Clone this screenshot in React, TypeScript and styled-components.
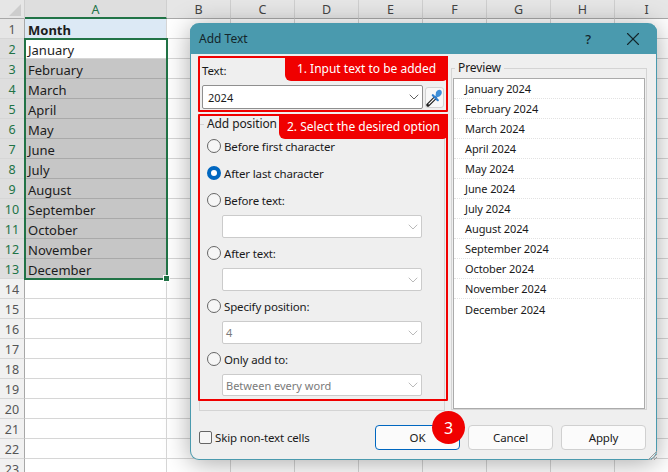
import * as React from "react";
import styled, { createGlobalStyle } from "styled-components";
import { ChevronDown, X } from "lucide-react";

const GlobalStyle = createGlobalStyle`
  html, body {
    margin: 0;
    padding: 0;
    background: #fff;
  }
  body {
    font-family: "Noto Sans", "Open Sans", sans-serif;
    overflow: hidden;
  }
`;

const Page = styled.div`
  position: relative;
  width: 668px;
  height: 472px;
  overflow: hidden;
`;

const Sheet = styled.div`
  display: grid;
  grid-template-columns: 25px 142px repeat(8, 64px);
  grid-template-rows: 19px repeat(23, 20px);
  font-size: 13px;
  color: #1c1c1c;
`;

const Corner = styled.div`
  background: #e6e6e6;
  border-right: 1px solid #cfcfcf;
  border-bottom: 1px solid #a8a8a8;
  box-sizing: border-box;
  position: relative;
  &::after {
    content: "";
    position: absolute;
    right: 3px;
    bottom: 2px;
    border-style: solid;
    border-width: 0 0 12px 12px;
    border-color: transparent transparent #cdcdcd transparent;
  }
`;

const ColHead = styled.div<{ $active?: boolean }>`
  box-sizing: border-box;
  display: flex;
  align-items: center;
  justify-content: center;
  padding-top: 1px;
  background: ${(p) => (p.$active ? "#dedede" : "#e6e6e6")};
  color: ${(p) => (p.$active ? "#217346" : "#444")};
  border-right: 1px solid #cfcfcf;
  border-bottom: ${(p) => (p.$active ? "2px solid #217346" : "1px solid #a8a8a8")};
  font-size: 12.5px;
`;

const RowHead = styled.div<{ $active?: boolean; $lit?: boolean }>`
  box-sizing: border-box;
  display: flex;
  align-items: center;
  justify-content: center;
  padding-top: 2px;
  background: ${(p) => (p.$active ? "#dedede" : p.$lit ? "#e6e6e6" : "#f1f1f1")};
  color: ${(p) => (p.$active ? "#217346" : "#555")};
  border-right: 1px solid ${(p) => (p.$active ? "#217346" : "#a8a8a8")};
  border-bottom: 1px solid #d6d6d6;
  font-size: 12.5px;
`;

const Cell = styled.div<{ $tone?: "title" | "shade" | "plain" }>`
  box-sizing: border-box;
  display: flex;
  align-items: center;
  padding: 2px 0 0 3px;
  white-space: nowrap;
  border-right: 1px solid #d6d6d6;
  border-bottom: 1px solid ${(p) => (p.$tone === "shade" ? "#a9a9a9" : "#d6d6d6")};
  background: ${(p) =>
    p.$tone === "title" ? "#dce9f5" : p.$tone === "shade" ? "#c6c6c6" : "#fff"};
  font-weight: ${(p) => (p.$tone === "title" ? 700 : 400)};
`;

const Selection = styled.div`
  position: absolute;
  left: 24px;
  top: 38px;
  width: 144px;
  height: 242px;
  box-sizing: border-box;
  border: 2px solid #217346;
  pointer-events: none;
  &::after {
    content: "";
    position: absolute;
    right: -4px;
    bottom: -4px;
    width: 5px;
    height: 5px;
    background: #217346;
    border: 1px solid #fff;
  }
`;

const Dialog = styled.div`
  position: absolute;
  left: 190px;
  top: 23px;
  width: 467px;
  height: 437px;
  box-sizing: border-box;
  display: flex;
  flex-direction: column;
  background: #efefef;
  border: 1px solid #4a9aae;
  border-top: 0;
  border-radius: 9px;
  box-shadow: 0 3px 26px rgba(0, 0, 0, 0.34);
  font-size: 11.5px;
  letter-spacing: -0.15px;
  color: #1a1a1a;
`;

const TitleBar = styled.div`
  height: 31px;
  flex: none;
  margin: 0 -1px;
  padding: 0 13px 0 9px;
  display: flex;
  align-items: center;
  background: #4a9aae;
  border-radius: 9px 9px 0 0;
`;

const Title = styled.span`
  flex: 1;
  font-size: 12px;
  letter-spacing: 0;
  color: #14262b;
`;

const HelpMark = styled.span`
  font-size: 13px;
  font-weight: 500;
  margin-right: 31px;
  color: #14262b;
`;

const Body = styled.div`
  flex: none;
  display: flex;
  gap: 6px;
  padding: 0 0 0 8px;
`;

const LeftColumn = styled.div`
  width: 246px;
  display: flex;
  flex-direction: column;
`;

const TextBlock = styled.div`
  padding: 10px 0 0 3px;
  height: 51px;
`;

const TextLabel = styled.div`
  line-height: 14px;
  margin-bottom: 7px;
`;

const TextRow = styled.div`
  display: flex;
  align-items: center;
  gap: 2px;
`;

const Combo = styled.div<{ $width?: number; $height?: number; $strong?: boolean; $off?: boolean }>`
  box-sizing: border-box;
  width: ${(p) => p.$width ?? 200}px;
  height: ${(p) => p.$height ?? 23}px;
  margin-left: ${(p) => (p.$strong ? 0 : 15)}px;
  flex: none;
  display: flex;
  align-items: center;
  padding: 0 0 0 ${(p) => (p.$strong ? 5 : 3)}px;
  background: #fff;
  border: 1px solid ${(p) => (p.$strong ? "#8f8f8f" : "#cbcbcb")};
  border-radius: 2px;
  color: ${(p) => (p.$off ? "#7a7a7a" : "#1a1a1a")};
  font-size: 11px;
  letter-spacing: 0;
  svg {
    margin-left: auto;
    color: ${(p) => (p.$strong ? "#555" : "#b5b5b5")};
  }
`;

const PickerButton = styled.div`
  box-sizing: border-box;
  width: 19px;
  height: 21px;
  display: flex;
  align-items: center;
  justify-content: center;
  background: #f8f8f8;
  border: 1px solid #d2d2d2;
  border-radius: 3px;
`;

const Group = styled.fieldset`
  margin: 0;
  min-width: 0;
  box-sizing: border-box;
  border: 1px solid #d4d4d4;
`;

const Legend = styled.legend<{ $indent: number }>`
  padding: 0 3px;
  margin-left: ${(p) => p.$indent}px;
  line-height: 18px;
  font-size: 12px;
  letter-spacing: -0.1px;
`;

const PositionGroup = styled(Group)`
  height: 296px;
  padding: 4px 0 0 7px;
  display: flex;
  flex-direction: column;
`;

const Option = styled.label<{ $gap?: number }>`
  height: 18px;
  margin-top: ${(p) => p.$gap ?? 0}px;
  flex: none;
  display: flex;
  align-items: center;
  gap: 3px;
`;

const Radio = styled.span<{ $on?: boolean }>`
  box-sizing: border-box;
  width: 14px;
  height: 14px;
  flex: none;
  border-radius: 50%;
  background: ${(p) => (p.$on ? "#fff" : "#f6f6f6")};
  border: ${(p) => (p.$on ? "4px solid #0067c0" : "1px solid #666")};
`;

const ComboSlot = styled.div<{ $top: number }>`
  margin-top: ${(p) => p.$top}px;
`;

const PreviewGroup = styled(Group)`
  width: 196px;
  height: 351px;
  margin-top: 5px;
  padding: 1px 1px 0;
`;

const PreviewList = styled.div`
  box-sizing: border-box;
  height: 331px;
  background: #fff;
  border: 1px solid #ababab;
`;

const PreviewRow = styled.div`
  height: 20px;
  box-sizing: border-box;
  padding-left: 11px;
  display: flex;
  align-items: center;
  border-bottom: 1px dotted #e2e2e2;
  font-size: 11px;
  letter-spacing: -0.1px;
  &:last-child {
    border-bottom: 0;
  }
`;

const Footer = styled.div`
  flex: 1;
  display: flex;
  align-items: flex-start;
  padding: 14px 10px 0 8px;
`;

const SkipLabel = styled.label`
  height: 25px;
  display: flex;
  align-items: center;
  gap: 3px;
`;

const CheckBox = styled.span`
  box-sizing: border-box;
  width: 13px;
  height: 13px;
  background: #f6f6f6;
  border: 1px solid #666;
  border-radius: 2px;
`;

const Buttons = styled.div`
  margin-left: auto;
  display: flex;
  gap: 8px;
`;

const Button = styled.div<{ $primary?: boolean }>`
  box-sizing: border-box;
  width: 85px;
  height: 25px;
  display: flex;
  align-items: center;
  justify-content: center;
  background: #fbfbfb;
  border: 1px solid ${(p) => (p.$primary ? "#0067c0" : "#d0d0d0")};
  border-radius: 4px;
`;

const Grip = styled.svg`
  position: absolute;
  right: -1px;
  bottom: -1px;
`;

const Highlight = styled.div<{ $top: number; $height: number }>`
  position: absolute;
  left: 198px;
  top: ${(p) => p.$top}px;
  width: 250px;
  height: ${(p) => p.$height}px;
  box-sizing: border-box;
  border: 2px solid #f00000;
  border-radius: 1px;
  pointer-events: none;
`;

const Callout = styled.div<{ $left: number; $top: number }>`
  position: absolute;
  left: ${(p) => p.$left}px;
  top: ${(p) => p.$top}px;
  right: 220px;
  height: 25px;
  display: flex;
  align-items: center;
  justify-content: center;
  background: #f00000;
  border-radius: 0 0 5px 6px;
  color: #fff;
  font-size: 12px;
  white-space: nowrap;
`;

const StepBadge = styled.div`
  position: absolute;
  left: 432px;
  top: 411px;
  width: 33px;
  height: 33px;
  display: flex;
  align-items: center;
  justify-content: center;
  border-radius: 50%;
  background: #f00000;
  color: #fff;
  font-size: 16px;
`;

const months = [
  "January",
  "February",
  "March",
  "April",
  "May",
  "June",
  "July",
  "August",
  "September",
  "October",
  "November",
  "December",
];

const columns = ["B", "C", "D", "E", "F", "G", "H", "I"];
const rowNumbers = Array.from({ length: 23 }, (_, i) => i + 1);

const Eyedropper = () => (
  <svg width="17" height="19" viewBox="0 0 17 19">
    <path d="M2 17 L9 10" stroke="#1f1f1f" strokeWidth="3.4" strokeLinecap="round" />
    <path d="M2.6 16.4 L9 10" stroke="#fff" strokeWidth="1.1" />
    <path d="M6.8 7.2 L11.8 12.2" stroke="#2f7fd0" strokeWidth="2.2" strokeLinecap="round" />
    <path d="M9.5 8 L10 4 Q12.5 0.6 15.2 2.4 Q17 5 13.8 8.2 L10.8 9.4 Z" fill="#3f8fd8" />
  </svg>
);

const Chevron = () => <ChevronDown size={16} strokeWidth={1.4} />;

const SheetGrid = () => (
  <Sheet>
    <Corner />
    <ColHead $active>A</ColHead>
    {columns.map((c) => (
      <ColHead key={c}>{c}</ColHead>
    ))}
    {rowNumbers.map((n) => {
      const month = months[n - 2];
      return (
        <React.Fragment key={n}>
          <RowHead $active={n >= 2 && n <= 13} $lit={n === 1}>
            {n}
          </RowHead>
          <Cell $tone={n === 1 ? "title" : n > 2 && n <= 13 ? "shade" : "plain"}>
            {n === 1 ? "Month" : month}
          </Cell>
          {columns.map((c) => (
            <Cell key={c} />
          ))}
        </React.Fragment>
      );
    })}
  </Sheet>
);

const App = () => {
  return (
    <Page>
      <GlobalStyle />
      <SheetGrid />
      <Selection />
      <Dialog>
        <TitleBar>
          <Title>Add Text</Title>
          <HelpMark>?</HelpMark>
          <X size={22} strokeWidth={1.2} color="#14262b" />
        </TitleBar>
        <Body>
          <LeftColumn>
            <TextBlock>
              <TextLabel>Text:</TextLabel>
              <TextRow>
                <Combo $strong $width={221} $height={24}>
                  2024
                  <Chevron />
                </Combo>
                <PickerButton>
                  <Eyedropper />
                </PickerButton>
              </TextRow>
            </TextBlock>
            <PositionGroup>
              <Legend $indent={-3}>Add position</Legend>
              <Option>
                <Radio />
                Before first character
              </Option>
              <Option $gap={9}>
                <Radio $on />
                After last character
              </Option>
              <Option $gap={9}>
                <Radio />
                Before text:
              </Option>
              <ComboSlot $top={6}>
                <Combo>
                  <Chevron />
                </Combo>
              </ComboSlot>
              <Option $gap={6}>
                <Radio />
                After text:
              </Option>
              <ComboSlot $top={6}>
                <Combo>
                  <Chevron />
                </Combo>
              </ComboSlot>
              <Option $gap={6}>
                <Radio />
                Specify position:
              </Option>
              <ComboSlot $top={6}>
                <Combo $off>
                  4
                  <Chevron />
                </Combo>
              </ComboSlot>
              <Option $gap={6}>
                <Radio />
                Only add to:
              </Option>
              <ComboSlot $top={6}>
                <Combo $off $height={22}>
                  Between every word
                  <Chevron />
                </Combo>
              </ComboSlot>
            </PositionGroup>
          </LeftColumn>
          <PreviewGroup>
            <Legend $indent={2}>Preview</Legend>
            <PreviewList>
              {months.map((m) => (
                <PreviewRow key={m}>{m} 2024</PreviewRow>
              ))}
            </PreviewList>
          </PreviewGroup>
        </Body>
        <Footer>
          <SkipLabel>
            <CheckBox />
            Skip non-text cells
          </SkipLabel>
          <Buttons>
            <Button $primary>OK</Button>
            <Button>Cancel</Button>
            <Button>Apply</Button>
          </Buttons>
        </Footer>
        <Grip width="10" height="10" viewBox="0 0 10 10">
          <path d="M10 1 L1 10 M10 4 L4 10 M10 7 L7 10" stroke="#9a9a9a" strokeWidth="1" />
        </Grip>
      </Dialog>
      <Highlight $top={56} $height={56} />
      <Highlight $top={114} $height={287} />
      <Callout $left={285} $top={56}>1. Input text to be added</Callout>
      <Callout $left={279} $top={114}>2. Select the desired option</Callout>
      <StepBadge>3</StepBadge>
    </Page>
  );
};

export default App;
